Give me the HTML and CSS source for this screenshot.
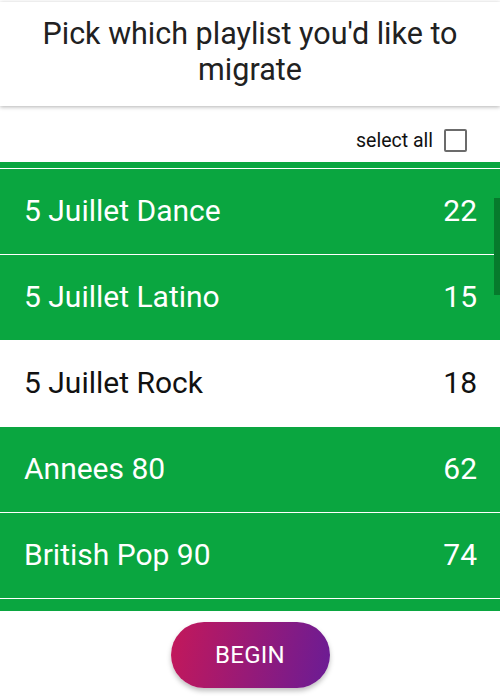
FILE: index.html
```
<!DOCTYPE html>
<html>
<head>
    <title>Migrate playlists</title>
    <link rel="stylesheet" href="styles.css">
</head>
<body>
<div class="screen">
    <div class="header">
        <h1 class="title">Pick which playlist you'd like to migrate</h1>
    </div>

    <div class="select-row">
        <span class="select-label">select all</span>
        <span class="checkbox"></span>
    </div>

    <div class="list">
        <div class="list-inner">
            <div class="row selected"><span class="name">4 Juillet Pop</span><span class="count">31</span></div>
            <div class="row selected"><span class="name">5 Juillet Dance</span><span class="count">22</span></div>
            <div class="row selected"><span class="name">5 Juillet Latino</span><span class="count">15</span></div>
            <div class="row"><span class="name">5 Juillet Rock</span><span class="count">18</span></div>
            <div class="row selected"><span class="name">Annees 80</span><span class="count">62</span></div>
            <div class="row selected"><span class="name">British Pop 90</span><span class="count">74</span></div>
            <div class="row selected"><span class="name">Chill Out</span><span class="count">40</span></div>
        </div>
        <div class="scrollbar"></div>
    </div>

    <div class="footer">
        <button class="begin">BEGIN</button>
    </div>
</div>
</body>
</html>
```

FILE: styles.css
```
body {
    margin: 0;
    font-family: Roboto, "Liberation Sans", sans-serif;
    background-color: #fff;
}

.screen {
    width: 500px;
    height: 700px;
    display: flex;
    flex-direction: column;
    overflow: hidden;
}

.header {
    margin-top: 2px;
    height: 104px;
    box-sizing: border-box;
    padding-bottom: 4px;
    display: flex;
    align-items: center;
    justify-content: center;
    background-color: #fff;
    box-shadow: 0 1px 4px rgba(0, 0, 0, 0.3);
    position: relative;
    z-index: 1;
}

.title {
    margin: 0;
    padding: 0 20px;
    font-size: 30.5px;
    font-weight: normal;
    line-height: 36px;
    text-align: center;
    color: #212121;
}

.select-row {
    height: 56px;
    box-sizing: border-box;
    padding: 12px 33px 0 0;
    display: flex;
    align-items: center;
    justify-content: flex-end;
}

.select-label {
    font-size: 19.5px;
    color: #111;
    margin-right: 11px;
}

.checkbox {
    width: 19px;
    height: 19px;
    border: 2px solid #6b6b6b;
    border-radius: 2px;
}

.list {
    height: 449px;
    overflow: hidden;
    position: relative;
}

.list-inner {
    margin-top: -78px;
}

.row {
    height: 85px;
    box-sizing: border-box;
    border-bottom: 1px solid #fff;
    display: flex;
    align-items: center;
    justify-content: space-between;
    padding: 0 23px 3px 24px;
    font-size: 30px;
    color: #111;
    background-color: #fff;
}

.row + .row {
    height: 86px;
}

.row.selected {
    background-color: #0aa640;
    color: #fff;
}

.scrollbar {
    position: absolute;
    right: 0;
    top: 36px;
    width: 6px;
    height: 97px;
    background-color: #067a2c;
}

.footer {
    flex: 1;
    display: flex;
    justify-content: center;
    padding-top: 11px;
}

.begin {
    width: 159px;
    height: 66px;
    border: none;
    border-radius: 33px;
    background: linear-gradient(100deg, #c4185a, #6a1c95);
    color: #fff;
    font-family: Roboto, "Liberation Sans", sans-serif;
    font-size: 24px;
    letter-spacing: 0.3px;
    box-shadow: 0 3px 5px rgba(0, 0, 0, 0.25);
    cursor: pointer;
}
```
